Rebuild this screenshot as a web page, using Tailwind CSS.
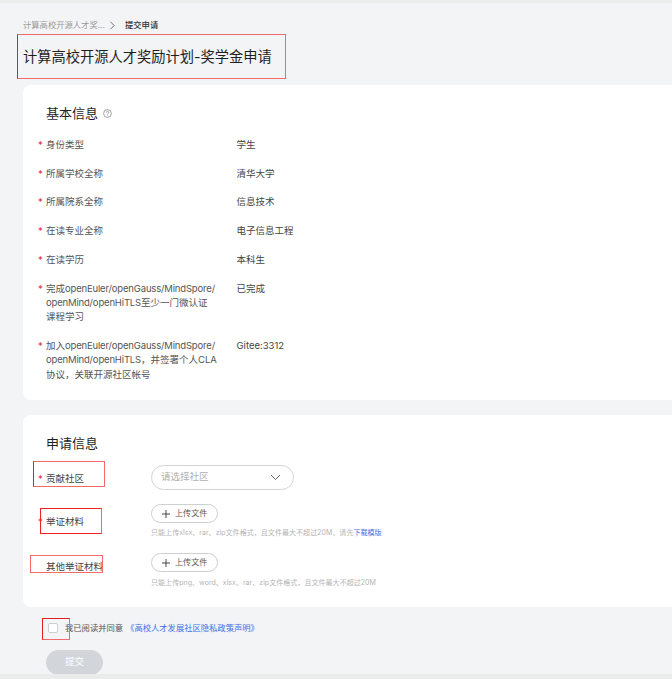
<!DOCTYPE html>
<html lang="zh-CN">
<head>
<meta charset="utf-8">
<script src="https://cdn.jsdelivr.net/npm/@tailwindcss/browser@4"></script>
</head>
<body class="m-0 overflow-hidden bg-[#f3f4f6]">
<div class="relative h-[679px] w-[672px] overflow-hidden bg-[#f3f4f6] font-['Inter','Noto_Sans_CJK_SC',sans-serif] text-[#2f2f2f]">
  <div class="h-[3px] bg-[#eceded]"></div>
  <nav class="mt-[17px] ml-[23px] flex h-[11px] items-center text-[8.3px] leading-[11px]">
    <span class="w-[84px] text-[#9a9a9a]">计算高校开源人才奖...</span>
    <svg class="mr-[8px] ml-[1px] h-[9px] w-[9px]" viewBox="0 0 9 9" fill="none" stroke="#555" stroke-width="0.8"><path d="M2.5 0.8 6.2 4.5 2.5 8.2"/></svg>
    <span class="text-[#333] font-medium">提交申请</span>
  </nav>
  <h1 class="mt-[14px] ml-[23px] h-[24px] text-[14.25px] leading-[24px] font-normal text-[#1f1f1f]">计算高校开源人才奖励计划-奖学金申请</h1>

  <section class="mt-[16px] ml-[23px] h-[315px] rounded-l-[8px] bg-white pt-[20px]">
    <div class="ml-[23px] flex h-[16px] items-center gap-[5px]">
      <h2 class="text-[13px] leading-[16px] font-normal text-[#1f1f1f]">基本信息</h2>
      <svg class="h-[9px] w-[9px]" viewBox="0 0 9 9" fill="none" stroke="#666" stroke-width="0.6"><circle cx="4.5" cy="4.5" r="3.9"/><path d="M3.2 3.6a1.3 1.3 0 1 1 2 1.1c-.5.3-.7.5-.7 1"/><path d="M4.5 6.5v.6"/></svg>
    </div>
    <div class="mt-[17px] flex flex-col gap-[14.3px] text-[9.5px] leading-[14.4px]">
      <div class="flex"><div class="relative ml-[23px] w-[191px] text-[#555]"><span class="absolute left-[-8px] text-[#d9303e]">*</span>身份类型</div><div class="ml-[-0.5px] text-[#444]">学生</div></div>
      <div class="flex"><div class="relative ml-[23px] w-[191px] text-[#555]"><span class="absolute left-[-8px] text-[#d9303e]">*</span>所属学校全称</div><div class="ml-[-0.5px] text-[#444]">清华大学</div></div>
      <div class="flex"><div class="relative ml-[23px] w-[191px] text-[#555]"><span class="absolute left-[-8px] text-[#d9303e]">*</span>所属院系全称</div><div class="ml-[-0.5px] text-[#444]">信息技术</div></div>
      <div class="flex"><div class="relative ml-[23px] w-[191px] text-[#555]"><span class="absolute left-[-8px] text-[#d9303e]">*</span>在读专业全称</div><div class="ml-[-0.5px] text-[#444]">电子信息工程</div></div>
      <div class="flex"><div class="relative ml-[23px] w-[191px] text-[#555]"><span class="absolute left-[-8px] text-[#d9303e]">*</span>在读学历</div><div class="ml-[-0.5px] text-[#444]">本科生</div></div>
      <div class="flex"><div class="relative ml-[23px] w-[191px] text-[#555]"><span class="absolute left-[-8px] text-[#d9303e]">*</span>完成<span class="tracking-[-0.17px]">openEuler/openGauss/MindSpore/<br>openMind/openHiTLS</span>至少一门微认证<br>课程学习</div><div class="ml-[-0.5px] text-[#444]">已完成</div></div>
      <div class="flex"><div class="relative ml-[23px] w-[191px] text-[#555]"><span class="absolute left-[-8px] text-[#d9303e]">*</span>加入<span class="tracking-[-0.17px]">openEuler/openGauss/MindSpore/<br>openMind/openHiTLS</span>，并签署个人CLA<br>协议，关联开源社区帐号</div><div class="ml-[-0.5px] text-[#444]">Gitee:3312</div></div>
    </div>
  </section>

  <section class="mt-[15px] ml-[23px] h-[192px] rounded-l-[8px] bg-white pt-[20px]">
    <h2 class="ml-[23px] h-[16px] text-[13px] leading-[16px] font-normal text-[#1f1f1f]">申请信息</h2>
    <div class="mt-[14px] flex items-center text-[9.5px]">
      <div class="relative mt-[4px] ml-[23px] w-[105px] text-[#444]"><span class="absolute left-[-8px] text-[#d9303e]">*</span>贡献社区</div>
      <div class="flex h-[25px] w-[143px] items-center justify-between rounded-full border border-[#d4d4d4] pr-[12px] pl-[9px] text-[#b0b0b0]">
        <span>请选择社区</span>
        <svg class="h-[7px] w-[11px]" viewBox="0 0 11 7" fill="none" stroke="#555" stroke-width="0.9"><path d="M1 1 5.5 5.5 10 1"/></svg>
      </div>
    </div>
    <div class="mt-[14px] flex">
      <div class="relative mt-[11px] ml-[23px] w-[105px] text-[9.5px] leading-[14px] text-[#444]"><span class="absolute left-[-8px] text-[#d9303e]">*</span>举证材料</div>
      <div>
        <div class="flex h-[19px] w-[67px] items-center rounded-full border border-[#cfcfcf] pl-[10px] text-[8.1px] text-[#555]">
          <svg class="mr-[5px] h-[8px] w-[8px]" viewBox="0 0 8 8" stroke="#333" stroke-width="0.9"><path d="M4 0v8M0 4h8"/></svg>上传文件
        </div>
        <p class="mt-[5px] text-[7.06px] leading-[10px] text-[#b5b5b5]">只能上传xlsx、rar、zip文件格式，且文件最大不超过20M，请先<span class="text-[#3f6fe8]">下载模版</span></p>
      </div>
    </div>
    <div class="mt-[15px] flex">
      <div class="mt-[7px] ml-[23px] w-[105px] text-[9.5px] leading-[14px] text-[#444]">其他举证材料</div>
      <div>
        <div class="flex h-[19px] w-[67px] items-center rounded-full border border-[#cfcfcf] pl-[10px] text-[8.1px] text-[#555]">
          <svg class="mr-[5px] h-[8px] w-[8px]" viewBox="0 0 8 8" stroke="#333" stroke-width="0.9"><path d="M4 0v8M0 4h8"/></svg>上传文件
        </div>
        <p class="mt-[6px] text-[7.06px] leading-[10px] text-[#b5b5b5]">只能上传png、word、xlsx、rar、zip文件格式，且文件最大不超过20M</p>
      </div>
    </div>
  </section>

  <div class="mt-[14px] ml-[48px] flex h-[14px] items-center text-[8.3px]">
    <span class="h-[10px] w-[10px] rounded-[2px] border border-[#cfcfcf] bg-white"></span>
    <span class="ml-[7px] text-[#555]">我已阅读并同意</span>
    <span class="ml-[3px] text-[#3f6fe8]">《高校人才发展社区隐私政策声明》</span>
  </div>
  <button class="mt-[15px] ml-[46px] block h-[25px] w-[57px] rounded-full bg-[#d2d6da] text-[9.5px] text-white">提交</button>
  <div class="absolute right-0 bottom-0 left-0 h-[5px] bg-[#eaebeb]"></div>

  <div class="absolute top-[34px] left-[17px] h-[45px] w-[269px] border border-[#f26a6a] border-l-[#e02020]"></div>
  <div class="absolute top-[461px] left-[33px] h-[26px] w-[72px] border border-[#f26a6a] border-l-[#e02020]"></div>
  <div class="absolute top-[508px] left-[40px] h-[26px] w-[62px] border border-[#f02020] border-r-[#f26a6a]"></div>
  <div class="absolute top-[555px] left-[30px] h-[18px] w-[73px] border border-[#f26a6a]"></div>
  <div class="absolute top-[618px] left-[42px] h-[22px] w-[28px] border border-[#f26a6a] border-t-[#e02020] border-l-[#e02020]"></div>
</div>
</body>
</html>
